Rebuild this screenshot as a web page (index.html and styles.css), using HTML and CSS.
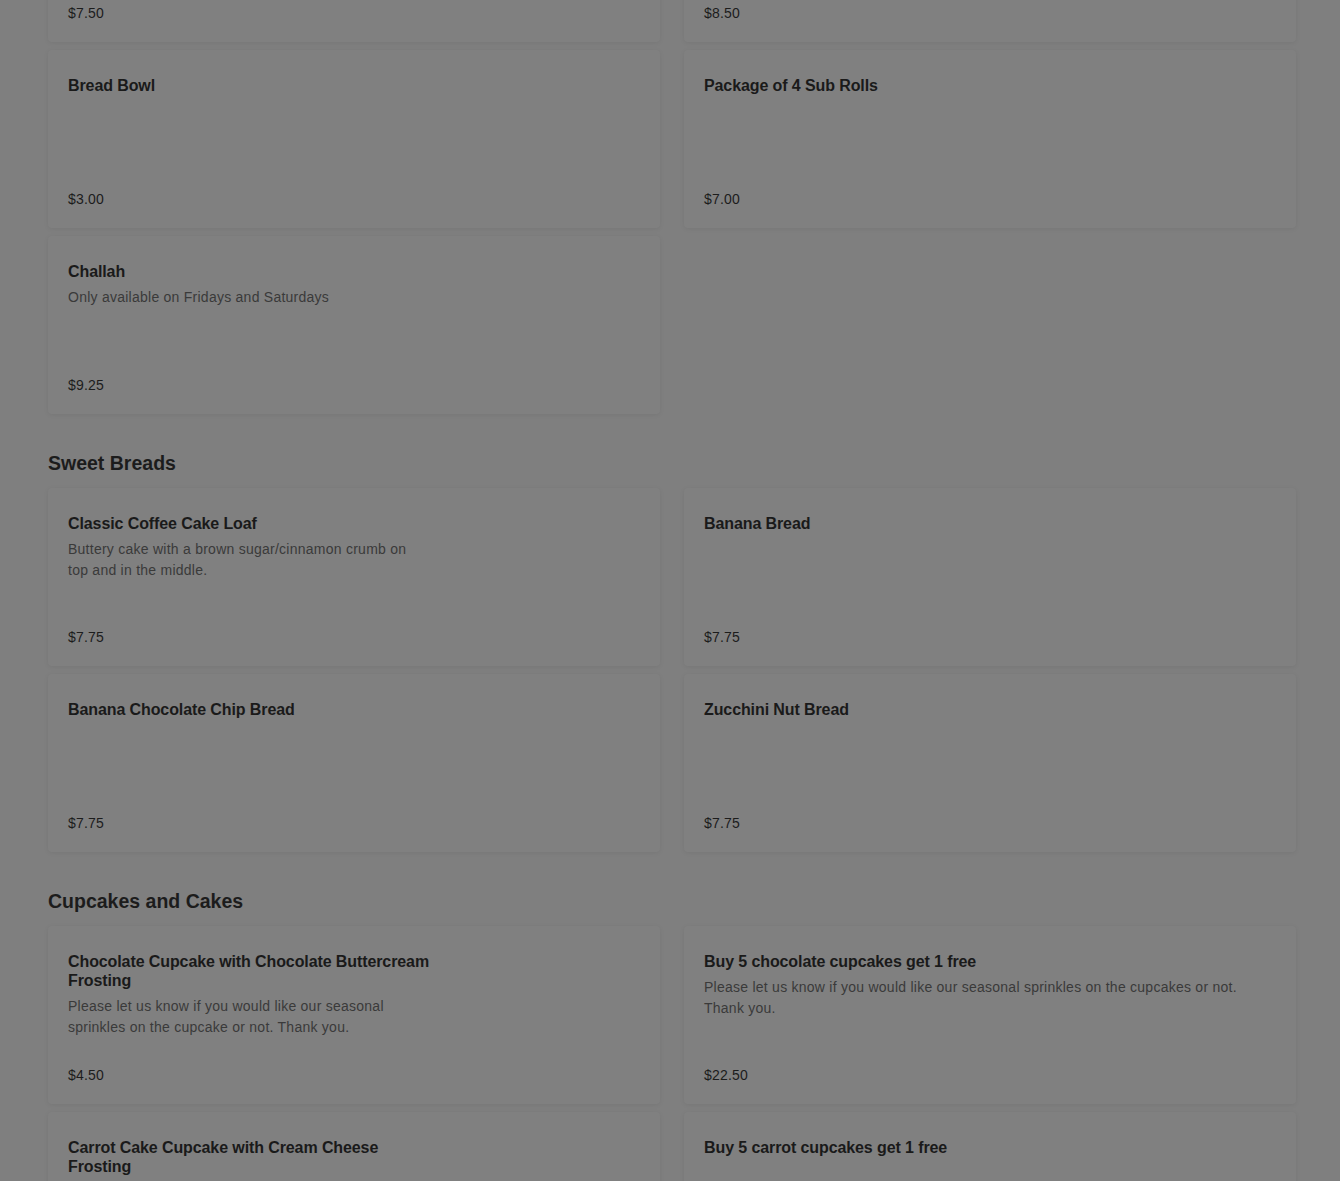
FILE: index.html
```html
<!DOCTYPE html>
<html lang="en">
<head>
<meta charset="utf-8">
<title>Menu</title>
<link rel="stylesheet" href="styles.css">
</head>
<body>
<main class="menu">
  <section class="section section-first">
    <div class="grid">
      <div class="card card-left"><div class="price">$7.50</div></div>
      <div class="card card-right"><div class="price">$8.50</div></div>
      <div class="card card-left">
        <h3 class="title">Bread Bowl</h3>
        <div class="price">$3.00</div>
      </div>
      <div class="card card-right">
        <h3 class="title">Package of 4 Sub Rolls</h3>
        <div class="price">$7.00</div>
      </div>
      <div class="card card-left">
        <h3 class="title">Challah</h3>
        <p class="desc">Only available on Fridays and Saturdays</p>
        <div class="price">$9.25</div>
      </div>
    </div>
  </section>

  <section class="section">
    <h2 class="heading">Sweet Breads</h2>
    <div class="grid">
      <div class="card card-left">
        <h3 class="title">Classic Coffee Cake Loaf</h3>
        <p class="desc">Buttery cake with a brown sugar/cinnamon crumb on top and in the middle.</p>
        <div class="price">$7.75</div>
      </div>
      <div class="card card-right">
        <h3 class="title">Banana Bread</h3>
        <div class="price">$7.75</div>
      </div>
      <div class="card card-left">
        <h3 class="title">Banana Chocolate Chip Bread</h3>
        <div class="price">$7.75</div>
      </div>
      <div class="card card-right">
        <h3 class="title">Zucchini Nut Bread</h3>
        <div class="price">$7.75</div>
      </div>
    </div>
  </section>

  <section class="section">
    <h2 class="heading">Cupcakes and Cakes</h2>
    <div class="grid">
      <div class="card card-left">
        <h3 class="title">Chocolate Cupcake with Chocolate Buttercream Frosting</h3>
        <p class="desc">Please let us know if you would like our seasonal sprinkles on the cupcake or not. Thank you.</p>
        <div class="price">$4.50</div>
      </div>
      <div class="card card-right">
        <h3 class="title">Buy 5 chocolate cupcakes get 1 free</h3>
        <p class="desc">Please let us know if you would like our seasonal sprinkles on the cupcakes or not. Thank you.</p>
        <div class="price">$22.50</div>
      </div>
      <div class="card card-left">
        <h3 class="title">Carrot Cake Cupcake with Cream Cheese Frosting</h3>
      </div>
      <div class="card card-right">
        <h3 class="title">Buy 5 carrot cupcakes get 1 free</h3>
      </div>
    </div>
  </section>
</main>
</body>
</html>
```

FILE: styles.css
```css
html {
  background: #7f7f7f;
}

body {
  margin: 0;
  background: #7f7f7f;
  font-family: "Liberation Sans", Arial, sans-serif;
  color: #1b1b1b;
  overflow: hidden;
}

.menu {
  width: 1248px;
  padding-left: 48px;
  margin-top: -136px;
}

.heading {
  margin: 37px 0 13px;
  font-size: 19.5px;
  line-height: 24px;
  font-weight: 700;
  color: #1c1c1c;
}

.grid {
  display: grid;
  grid-template-columns: 612px 612px;
  column-gap: 24px;
  row-gap: 8px;
}

.card {
  box-sizing: border-box;
  height: 178px;
  padding: 26px 20px 20px;
  display: flex;
  flex-direction: column;
  background: #808080;
  border-radius: 4px;
  box-shadow: 0 1px 5px rgba(0, 0, 0, 0.07);
}

.title {
  margin: 0;
  font-size: 16px;
  line-height: 19px;
  font-weight: 700;
  letter-spacing: -0.1px;
  color: #1a1a1a;
}

.card-left .title {
  max-width: 368px;
}

.card-left .desc {
  max-width: 352px;
}

.card-right .title,
.card-right .desc {
  max-width: 556px;
}

.desc {
  margin: 6px 0 0;
  font-size: 14px;
  line-height: 21px;
  letter-spacing: 0.25px;
  color: #3a3a3a;
}

.price {
  margin-top: auto;
  font-size: 14px;
  line-height: 18px;
  letter-spacing: 0.2px;
  color: #1c1c1c;
}
```
